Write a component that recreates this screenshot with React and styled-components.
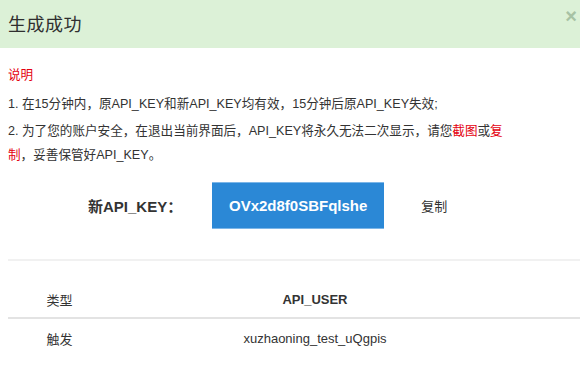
import styled, { createGlobalStyle } from "styled-components";

const Global = createGlobalStyle`
  html, body {
    margin: 0;
    padding: 0;
    background: #fff;
  }
  body {
    font-family: "Liberation Sans", "Noto Sans CJK SC", sans-serif;
    color: #333;
  }
`;

const Modal = styled.div`
  width: 580px;
  height: 367px;
  overflow: hidden;
  background: #fff;
`;

const Header = styled.div`
  height: 48px;
  background: #dcf1d7;
  display: flex;
  align-items: center;
  justify-content: space-between;
  padding: 0 3px 2px 8px;
  box-sizing: border-box;
`;

const Title = styled.h4`
  margin: 0;
  font-size: 18px;
  font-weight: normal;
  color: #2f2f2f;
  letter-spacing: 0.5px;
`;

const Close = styled.span`
  font-size: 20px;
  font-weight: bold;
  color: #a7c2a4;
  line-height: 1;
  margin-top: -14px;
  cursor: pointer;
`;

const Body = styled.div`
  padding: 15px 0 0 8px;
  font-size: 12.6px;
`;

const Note = styled.p`
  margin: 0 0 ${(p) => p.$gap || 3}px;
  line-height: 24px;
  width: ${(p) => p.$width || "auto"};
  color: ${(p) => (p.$red ? "#e4000f" : "#333")};
`;

const Red = styled.span`
  color: #e4000f;
`;

const KeyRow = styled.div`
  display: flex;
  align-items: center;
  margin-top: 15px;
  padding-left: 80px;
`;

const KeyLabel = styled.span`
  font-size: 15px;
  font-weight: bold;
  color: #333;
  margin-right: 30px;
`;

const KeyValue = styled.div`
  width: 172px;
  height: 45px;
  background: #2b88d6;
  border-top: 1px solid #7cb6e8;
  border-bottom: 1px solid #7cb6e8;
  color: #fff;
  font-size: 15px;
  font-weight: bold;
  display: flex;
  align-items: center;
  justify-content: center;
`;

const CopyLink = styled.span`
  margin-left: 37px;
  font-size: 13px;
  color: #333;
  cursor: pointer;
`;

const Divider = styled.div`
  height: 2px;
  background: #f1f1f1;
  margin-top: 30px;
`;

const Table = styled.div`
  margin-top: 20px;
  display: grid;
  grid-template-columns: 103px 408px 1fr;
`;

const HeadCell = styled.div`
  height: 36px;
  display: flex;
  align-items: center;
  justify-content: center;
  font-size: 13px;
  font-weight: ${(p) => (p.$bold ? "bold" : "normal")};
  border-bottom: 2px solid #e3e3e3;
`;

const Cell = styled.div`
  height: 38px;
  display: flex;
  align-items: center;
  justify-content: center;
  font-size: 13px;
`;

export default function App() {
  return (
    <>
      <Global />
      <Modal>
        <Header>
          <Title>生成成功</Title>
          <Close>×</Close>
        </Header>
        <Body>
          <Note $red $gap={5}>说明</Note>
          <Note>1. 在15分钟内，原API_KEY和新API_KEY均有效，15分钟后原API_KEY失效;</Note>
          <Note $width="508px">
            2. 为了您的账户安全，在退出当前界面后，API_KEY将永久无法二次显示，请您
            <Red>截图</Red>或<Red>复制</Red>，妥善保管好API_KEY。
          </Note>
          <KeyRow>
            <KeyLabel>新API_KEY：</KeyLabel>
            <KeyValue>OVx2d8f0SBFqlshe</KeyValue>
            <CopyLink>复制</CopyLink>
          </KeyRow>
          <Divider />
          <Table>
            <HeadCell>类型</HeadCell>
            <HeadCell $bold>API_USER</HeadCell>
            <HeadCell />
            <Cell>触发</Cell>
            <Cell>xuzhaoning_test_uQgpis</Cell>
            <Cell />
          </Table>
        </Body>
      </Modal>
    </>
  );
}
